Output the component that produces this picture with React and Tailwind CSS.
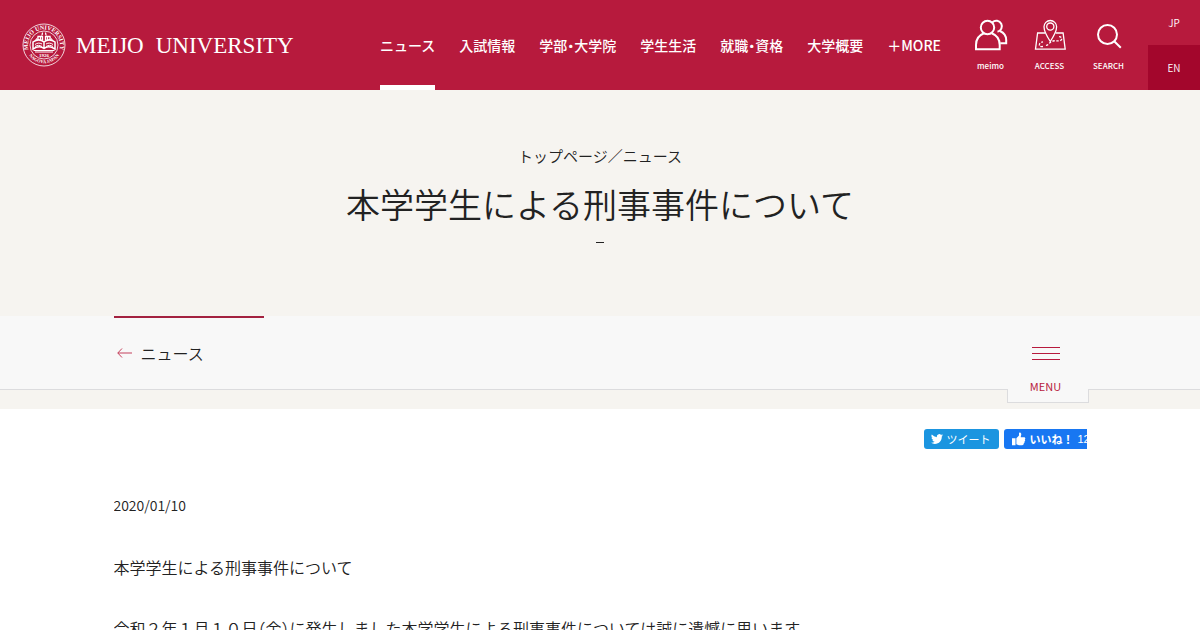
const navItems = ['ニュース', '入試情報', '学部・大学院', '学生生活', '就職・資格', '大学概要', '＋MORE'];

function Seal() {
  return (
    <svg viewBox="0 0 88 88" className="size-11 shrink-0 text-white" fill="none" stroke="currentColor" aria-hidden="true">
      <defs>
        <path id="ring-top" d="M14 56A32 32 0 1 1 74 56" />
        <path id="ring-bottom" d="M14 65A37 37 0 0 0 74 65" />
      </defs>
      <circle cx="44" cy="44" r="42" strokeWidth="1.6" />
      <circle cx="44" cy="44" r="28" strokeWidth="1.6" />
      <g fill="currentColor" stroke="none" fontFamily="Liberation Serif, serif" fontWeight="700">
        <text fontSize="12" textAnchor="middle">
          <textPath href="#ring-top" startOffset="50%">MEIJO UNIVERSITY</textPath>
        </text>
        <text fontSize="9" textAnchor="middle">
          <textPath href="#ring-bottom" startOffset="50%">NAGOYA JAPAN</textPath>
        </text>
        <text x="44" y="67" fontSize="10" textAnchor="middle">1926</text>
      </g>
      <path d="M23 55h42M26 58h36" strokeWidth="2" />
      <path d="M44 51C38 46 30 47 22 52V38c7-5 15-6 22 0 7-6 15-5 22 0v14c-8-5-16-6-22-1ZM44 38v12" strokeWidth="3" />
      <path d="M26 43c4-3 9-4 14-1M26 47c5-3 9-3 14 0M48 42c5-3 10-2 14 1M48 47c5-3 9-3 14 0" strokeWidth="2" />
      <path d="M32 34v-7h8M56 34v-7h-8M37 35v-7M41 35v-9M47 35v-9M51 35v-7M40 25l1-6M48 25l-1-6" strokeWidth="2.600" />
      <path d="M27 35l4-6M61 35l-4-6" strokeWidth="2" />
    </svg>
  );
}

function PeopleIcon() {
  return (
    <svg viewBox="0 0 34 32" className="h-8 w-[34px]" fill="none" stroke="currentColor" strokeWidth="2" aria-hidden="true">
      <circle cx="13.500" cy="8.500" r="6.700" />
      <path d="M10 14.300C5 16.200 2 20.500 2 26v4.200h23.700V26c0-5.500-3-9.800-8-11.700" />
      <path d="M18.500 3.200A5.600 5.600 0 1 1 23.500 12.800M26 12c4.200 2 6.200 5 6.200 9v3.200h-6" />
    </svg>
  );
}

function MapIcon() {
  return (
    <svg viewBox="0 0 32 32" className="size-8" fill="none" stroke="currentColor" strokeWidth="1.300" aria-hidden="true">
      <path d="M16.300 22.500C13 17.500 10 12.500 10 7.800a6.300 6.300 0 0 1 12.600 0c0 4.700-3 9.700-6.300 14.700Z" />
      <circle cx="16.300" cy="7.600" r="3.600" />
      <path d="M11 14H3.600L1.500 30.200h29.700L29.100 14h-7.500" />
      <path d="M9 27.500c-3 .5-4-.5-3.500-2.300.3-1.500 1.700-2 3.500-2.300M12 26.500c3.500-1 3-3.300 7-4.500 3-.8 7 .8 8.500-1.300.8-1.700-.3-3.200-3-3" strokeDasharray="2.400 1.500" />
    </svg>
  );
}

function SearchIcon() {
  return (
    <svg viewBox="0 0 32 32" className="size-8" fill="none" stroke="currentColor" strokeWidth="2" aria-hidden="true">
      <circle cx="14.500" cy="15.500" r="9.500" />
      <path d="m21.200 22.200 6.600 6.600" />
    </svg>
  );
}

const tools = [
  { label: 'meimo', Icon: PeopleIcon },
  { label: 'ACCESS', Icon: MapIcon },
  { label: 'SEARCH', Icon: SearchIcon },
];

function Header() {
  return (
    <header className="flex h-[90px] bg-[#b71a3d] text-white">
      <a href="#home" className="flex items-center gap-2.5 pl-[22px] font-['Liberation_Serif',serif] text-[23px] leading-none">
        <Seal />
        <span className="flex gap-3 whitespace-nowrap">
          <span>MEIJO</span>
          <span>UNIVERSITY</span>
        </span>
      </a>
      <nav className="ml-auto mr-5 flex gap-6 text-sm font-medium">
        {navItems.map((item, i) => (
          <a
            key={item}
            href="#nav"
            className={`flex items-center whitespace-nowrap border-b-5 pt-1 ${i === 0 ? 'border-white' : 'border-transparent'}`}
          >
            {item}
          </a>
        ))}
      </nav>
      <div className="mr-2.5 flex">
        {tools.map(({ label, Icon }) => (
          <a key={label} href="#tool" className="flex w-[59px] flex-col items-center gap-[9px] pt-[19px] text-[8px] font-medium leading-3">
            <Icon />
            <span>{label}</span>
          </a>
        ))}
      </div>
      <div className="flex w-[52px] flex-col text-[10px] font-[350]">
        <a href="#jp" className="flex flex-1 items-center justify-center">JP</a>
        <a href="#en" className="flex flex-1 items-center justify-center bg-[#a3062c]">EN</a>
      </div>
    </header>
  );
}

export default function App() {
  return (
    <div className="h-screen overflow-hidden bg-white font-['Noto_Sans_CJK_JP',sans-serif] font-[350] text-[#222] [font-feature-settings:'halt']">
      <Header />
      <main>
        <section className="flex h-[226px] flex-col items-center bg-[#f6f4f0] pt-[54px]">
          <p className="text-[15px] leading-6">
            <a href="#top">トップページ</a>／<a href="#news">ニュース</a>
          </p>
          <h1 className="mt-1.5 text-[34px] font-[350] leading-[60px]">本学学生による刑事事件について</h1>
          <span className="mt-2 h-px w-2 bg-[#222]" />
        </section>
        <div className="bg-[#f6f4f0] pb-[19px]">
          <div className="h-[74px] border-b border-[#dcdcde] bg-[#f8f8f8]">
            <div className="mx-auto flex max-w-[973px] items-start justify-between">
              <a href="#news" className="flex h-[72px] w-[150px] items-center gap-2 border-t-2 border-[#a3213f] pl-[3px] text-base">
                <svg viewBox="0 0 16 10" className="h-2.5 w-4" fill="none" stroke="#c4405c" aria-hidden="true">
                  <path d="M5 .5.800 5 5 9.500M.800 5H15" />
                </svg>
                ニュース
              </a>
              <button className="-mr-0.5 flex h-[87px] w-[82px] flex-col items-center border border-t-0 border-[#dcdcde] bg-[#f8f8f8] pr-1 pt-[31px] text-[#b71a3d] [border-image:linear-gradient(to_bottom,transparent_73px,#dcdcde_73px)_1]">
                <span className="flex w-7 flex-col gap-[5px]">
                  <span className="h-px bg-[#b71a3d]" />
                  <span className="h-px bg-[#b71a3d]" />
                  <span className="h-px bg-[#b71a3d]" />
                </span>
                <span className="mt-[18px] text-[11px] font-normal leading-4">MENU</span>
              </button>
            </div>
          </div>
        </div>
        <article className="mx-auto max-w-[973px] overflow-hidden pt-5">
          <div className="ml-auto flex w-[163px] gap-[5px] overflow-hidden text-[11px] leading-5 text-white">
            <a href="#tweet" className="flex h-5 w-[75px] shrink-0 items-center gap-1 rounded-[3px] bg-[#1b95e0] pl-[7px] font-normal [font-feature-settings:normal]">
              <svg viewBox="0 0 24 24" className="size-3 shrink-0" fill="currentColor" aria-hidden="true">
                <path d="M23.950 4.570a10 10 0 0 1-2.820.770 4.960 4.960 0 0 0 2.160-2.720c-.950.550-2 .950-3.120 1.180a4.920 4.920 0 0 0-8.380 4.480A13.980 13.980 0 0 1 1.640 3.160a4.920 4.920 0 0 0 1.520 6.570 4.900 4.900 0 0 1-2.230-.610v.060a4.920 4.920 0 0 0 3.950 4.830 5 5 0 0 1-2.210.080 4.940 4.940 0 0 0 4.600 3.420A9.870 9.870 0 0 1 0 19.540a13.990 13.990 0 0 0 7.550 2.210c9.050 0 14-7.500 14-13.980 0-.210 0-.420-.020-.630a9.940 9.940 0 0 0 2.420-2.570Z" />
              </svg>
              ツイート
            </a>
            <a href="#like" className="flex h-5 w-[110px] shrink-0 items-center rounded-[3px] bg-[#1877f2] pl-2 font-normal [font-feature-settings:normal]">
              <svg viewBox="0 0 16 16" className="mr-1 size-3.5 shrink-0" fill="currentColor" aria-hidden="true">
                <path d="M0 7h4v8H0zM5 7l3-3V1c0-1 2.600-.800 2.600 1.600 0 1.400-.600 2.400-.600 3.400h3.800c1.600 0 1.800 2 .800 2.600.8.800.5 2-.5 2.300.5.800.1 1.800-.8 2.100.3 1.200-.3 2-1.700 2H8c-1.300 0-2-.8-3-1Z" />
              </svg>
              <span className="font-bold">いいね！</span>
              <span className="ml-1 whitespace-nowrap font-['Liberation_Sans',sans-serif]">126</span>
            </a>
          </div>
          <time className="mt-11 block text-sm leading-6">2020/01/10</time>
          <div className="mt-[35px] text-base leading-[30px]">
            <p>本学学生による刑事事件について</p>
            <p className="mt-[31px]">令和２年１月１０日（金）に発生しました本学学生による刑事事件については誠に遺憾に思います。</p>
          </div>
        </article>
      </main>
    </div>
  );
}
